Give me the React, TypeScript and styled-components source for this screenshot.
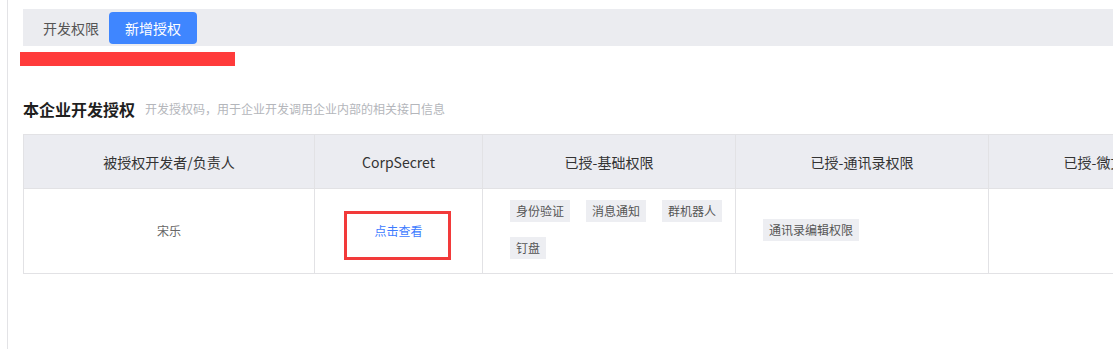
import React from "react";
import styled, { createGlobalStyle } from "styled-components";

const GlobalStyle = createGlobalStyle`
  html, body {
    margin: 0;
    padding: 0;
    background: #ffffff;
    overflow: hidden;
  }
  body {
    font-family: "Noto Sans CJK SC", "Noto Sans", sans-serif;
    color: #333;
  }
`;

const Page = styled.div`
  position: relative;
  margin-left: 7px;
  border-left: 1px solid #e3e3e6;
  min-height: 349px;
  box-sizing: border-box;
  padding: 9px 0 0 15px;
  overflow: hidden;
`;

const TabBar = styled.div`
  display: flex;
  align-items: center;
  height: 37px;
  padding-left: 4px;
  background: #ebecf0;
`;

const Tab = styled.div<{ $active?: boolean }>`
  height: 32px;
  display: flex;
  align-items: center;
  padding: ${(p) => (p.$active ? "0 16px" : "0 10px 0 16px")};
  border-radius: 4px;
  font-size: 14px;
  line-height: 20px;
  color: ${(p) => (p.$active ? "#ffffff" : "#555")};
  background: ${(p) => (p.$active ? "#3f86ff" : "transparent")};
`;

const Redaction = styled.div`
  position: absolute;
  left: 12px;
  top: 52px;
  width: 215px;
  height: 14px;
  background: #ff3b3b;
`;

const SectionHeader = styled.div`
  display: flex;
  align-items: center;
  gap: 10px;
  height: 22px;
  margin-top: 52px;
`;

const Title = styled.h2`
  margin: 0;
  font-size: 16px;
  line-height: 22px;
  font-weight: 700;
  color: #1f1f1f;
`;

const Subtitle = styled.span`
  font-size: 12px;
  line-height: 18px;
  color: #b4b6bb;
`;

const TableWrap = styled.div`
  margin-top: 14px;
  width: 1400px;
`;

const Table = styled.table`
  border-collapse: collapse;
  table-layout: fixed;
  width: 1218px;
  border: 1px solid #e2e2e5;
`;

const HeadCell = styled.th`
  height: 53px;
  padding: 0;
  background: #ebecf1;
  border: 1px solid #e2e2e5;
  font-size: 14px;
  line-height: 20px;
  font-weight: 400;
  color: #333;
  text-align: center;
  white-space: nowrap;
  overflow: hidden;
`;

const Cell = styled.td<{ $tags?: boolean }>`
  position: relative;
  height: 83px;
  box-sizing: border-box;
  padding: ${(p) => (p.$tags ? "11px 0 10px 27px" : "0")};
  border: 1px solid #e2e2e5;
  font-size: 12px;
  line-height: 18px;
  color: #666;
  text-align: ${(p) => (p.$tags ? "left" : "center")};
  vertical-align: middle;
`;

const Link = styled.a`
  color: #3d7bff;
  text-decoration: none;
  cursor: pointer;
`;

const Highlight = styled.div`
  position: absolute;
  left: 29px;
  top: 22px;
  width: 107px;
  height: 49px;
  box-sizing: border-box;
  border: 3px solid #f23a3a;
  pointer-events: none;
`;

const TagList = styled.div`
  display: flex;
  flex-wrap: wrap;
  gap: 15px 16px;
  padding-bottom: 4px;
`;

const Tag = styled.span`
  display: inline-block;
  height: 22px;
  line-height: 22px;
  padding: 0 6px;
  background: #edeef2;
  color: #555;
  font-size: 12px;
  white-space: nowrap;
`;

const columns = [291, 168, 253, 253, 253];
const headers = [
  "被授权开发者/负责人",
  "CorpSecret",
  "已授-基础权限",
  "已授-通讯录权限",
  "已授-微文档权限",
];

export default function App() {
  return (
    <>
      <GlobalStyle />
      <Page>
        <TabBar>
          <Tab>开发权限</Tab>
          <Tab $active>新增授权</Tab>
        </TabBar>
        <Redaction />
        <SectionHeader>
          <Title>本企业开发授权</Title>
          <Subtitle>开发授权码，用于企业开发调用企业内部的相关接口信息</Subtitle>
        </SectionHeader>
        <TableWrap>
          <Table>
            <colgroup>
              {columns.map((w, i) => (
                <col key={i} style={{ width: w }} />
              ))}
            </colgroup>
            <thead>
              <tr>
                {headers.map((h) => (
                  <HeadCell key={h}>{h}</HeadCell>
                ))}
              </tr>
            </thead>
            <tbody>
              <tr>
                <Cell>宋乐</Cell>
                <Cell>
                  <Link>点击查看</Link>
                  <Highlight />
                </Cell>
                <Cell $tags>
                  <TagList>
                    <Tag>身份验证</Tag>
                    <Tag>消息通知</Tag>
                    <Tag>群机器人</Tag>
                    <Tag>钉盘</Tag>
                  </TagList>
                </Cell>
                <Cell $tags>
                  <TagList>
                    <Tag>通讯录编辑权限</Tag>
                  </TagList>
                </Cell>
                <Cell />
              </tr>
            </tbody>
          </Table>
        </TableWrap>
      </Page>
    </>
  );
}
